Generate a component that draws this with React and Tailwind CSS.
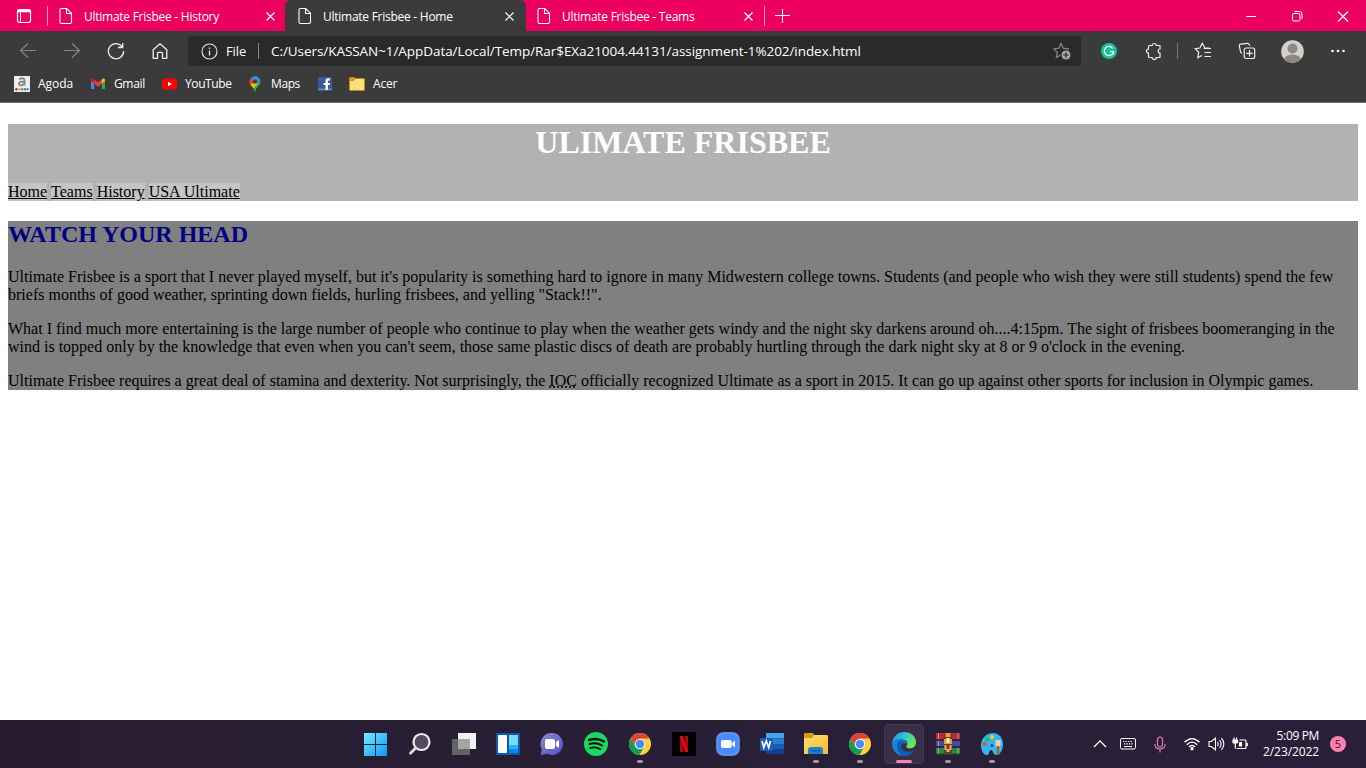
import React from "react";

const ui = "font-['Open_Sans','Noto_Sans',sans-serif]";

function Doc() {
  return (
    <svg width="14" height="18" viewBox="0 0 14 18" fill="none" stroke="#fff" strokeWidth="1.1">
      <path d="M2.500 1.500h5.200l4.800 4.800v8.700q0 1.500-1.500 1.500H2.500q-1.500 0-1.500-1.500V3q0-1.500 1.500-1.500z M7.500 1.500v5h5" />
    </svg>
  );
}

function Tab({ title, active }) {
  return (
    <div className={`relative flex h-8 w-[239px] shrink-0 items-center pl-[11px] ${active ? "-ml-[2px] w-[241px] rounded-t-[6px] bg-[#3b3b3b] pl-[13px]" : ""}`}>
      <Doc />
      <span className="mt-px ml-[11px] w-[174px] text-[12px] leading-4 tracking-[-0.26px] whitespace-nowrap text-white">{title}</span>
      <svg width="24" height="24" viewBox="0 0 24 24" stroke="#fff" strokeWidth="1.2">
        <path d="M8.500 8.500l8 8M16.500 8.500l-8 8" />
      </svg>
    </div>
  );
}

function Slot({ w = "w-11", children }) {
  return <div className={`flex h-full shrink-0 items-center justify-center ${w}`}>{children}</div>;
}

function TabStrip() {
  return (
    <div className="flex h-[31px] shrink-0 overflow-hidden bg-[#eb005f]">
      <div className="flex w-[48px] items-center justify-between">
        <svg className="ml-[16px]" width="16" height="16" viewBox="0 0 16 16" fill="none" stroke="#fff">
          <rect x="1.500" y="1.500" width="13" height="13" rx="2" strokeWidth="1.200" />
          <path d="M1.500 3h13" strokeWidth="2.600" />
          <path d="M4.500 4v10.500" strokeWidth="1" />
        </svg>
        <div className="h-5 w-px bg-[#f896bf]" />
      </div>
      <Tab title="Ultimate Frisbee - History" />
      <Tab title="Ultimate Frisbee - Home" active />
      <Tab title="Ultimate Frisbee - Teams" />
      <div className="my-auto -ml-px h-5 w-px bg-[#f896bf]" />
      <svg className="mt-[8px] ml-[9px]" width="16" height="16" viewBox="0 0 16 16" stroke="#fff" strokeWidth="1.100">
        <path d="M8.500 1v14M1 7.500h15" />
      </svg>
      <div className="ml-auto flex">
        <Slot w="w-[46px]">
          <svg width="12" height="12" viewBox="0 0 12 12" stroke="#fff"><path d="M1 6.500h10" /></svg>
        </Slot>
        <Slot w="w-[46px]">
          <svg width="12" height="12" viewBox="0 0 12 12" fill="none" stroke="#fff">
            <rect x="1.500" y="3.500" width="7.500" height="7.500" rx="1.500" />
            <path d="M3.500 1.500h5q2.500 0 2.500 2.500v5" />
          </svg>
        </Slot>
        <Slot w="w-[46px]">
          <svg width="12" height="12" viewBox="0 0 12 12" stroke="#fff" strokeWidth="1.200"><path d="M1 1.500l10 10M11 1.500l-10 10" /></svg>
        </Slot>
      </div>
    </div>
  );
}

function Toolbar() {
  return (
    <div className="flex h-10 shrink-0 items-center pl-[6px]">
      <Slot>
        <svg width="18" height="18" viewBox="0 0 18 18" fill="none" stroke="#858585" strokeWidth="1.200"><path d="M17 8.500H1.500M9 1.500l-7.500 7 7.500 7" /></svg>
      </Slot>
      <Slot>
        <svg width="18" height="18" viewBox="0 0 18 18" fill="none" stroke="#858585" strokeWidth="1.200"><path d="M1 8.500h15.500M9 1.500l7.500 7-7.500 7" /></svg>
      </Slot>
      <Slot>
        <svg width="18" height="18" viewBox="0 0 18 18" fill="none" stroke="#eee" strokeWidth="1.300"><path d="M15.200 4.800A7.600 7.600 0 1 0 16.600 9M15.700 1v4.500h-4.700" /></svg>
      </Slot>
      <Slot>
        <svg width="18" height="18" viewBox="0 0 18 18" fill="none" stroke="#eee" strokeWidth="1.300"><path d="M2.200 7.800L9 1.700l6.800 6.100v8.500h-4.300v-5q0-1-1-1h-3q-1 0-1 1v5H2.200z" strokeLinejoin="round" /></svg>
      </Slot>
      <div className="ml-[6px] flex h-[30px] w-[893px] items-center rounded-[3px] bg-[#2a2a2a] pl-[13px] text-white">
        <svg width="17" height="17" viewBox="0 0 17 17" fill="none" stroke="#e6e6e6" strokeWidth="1.100">
          <circle cx="8.500" cy="8.500" r="7.500" /><path d="M8.500 7.500v5M8.500 4.500v1.500" strokeWidth="1.300" />
        </svg>
        <span className="mt-px ml-2 w-8 text-[13px] tracking-[-0.1px]">File</span>
        <div className="h-4 w-px bg-[#8a8a8a]" />
        <span className="mt-px ml-3 text-[13.5px] tracking-[-0.06px] whitespace-nowrap">
          C:/Users/KASSAN~1/AppData/Local/Temp/Rar$EXa21004.44131/assignment-1%202/index.html
        </span>
        <svg className="mr-[10px] ml-auto" width="18" height="18" viewBox="0 0 18 18" fill="none">
          <path d="M8 1.500l2.200 4.700 5.200.7-3.900 3.500 1 5.100L8 13l-4.600 2.500.9-5.100L.8 6.900l5.100-.7z" stroke="#8a8a8a" strokeWidth="1.200" />
          <circle cx="13" cy="13" r="5" fill="#a8a8a8" stroke="#2a2a2a" />
          <path d="M13 10.200v5.600M10.200 13h5.600" stroke="#2a2a2a" strokeWidth="1.200" />
        </svg>
      </div>
      <div className="flex h-full items-center pl-[6px]">
        <Slot>
          <svg width="16" height="16" viewBox="0 0 16 16" fill="none">
            <circle cx="8" cy="8" r="8" fill="#15c39a" />
            <path d="M11.700 5.300A4.600 4.600 0 1 0 12.500 8.700H8.900M12.500 8.700v2.800" stroke="#fff" strokeWidth="1.300" />
          </svg>
        </Slot>
        <Slot w="w-[45px]">
          <svg width="18" height="18" viewBox="0 0 18 18" fill="none" stroke="#eee" strokeWidth="1.200" strokeLinejoin="round">
            <path d="M5 3.500H7.200a2 2 0 0 1 4 0H15V7a1.900 1.900 0 0 0 0 3.800V15.500h-3.800a2 2 0 0 1-4 0H4.500q-1 0-1-1V11.200a2 2 0 0 1 0-4V4.500q0-1 1-1z" />
          </svg>
        </Slot>
        <div className="mr-[3px] ml-px h-4 w-px bg-[#777]" />
        <Slot>
          <svg width="18" height="18" viewBox="0 0 18 18" fill="none" stroke="#eee" strokeWidth="1.200">
            <path d="M15.500 6.200l-4.800-.4L8.200 1.300 5.900 6 1.200 6.600l3.500 3.700-.9 5.400 4.100-2.200M9.700 6.500H17M10.500 10.500H17M10.500 14.500H17" />
          </svg>
        </Slot>
        <Slot>
          <svg width="18" height="18" viewBox="0 0 18 18" fill="none" stroke="#eee" strokeWidth="1.200">
            <path d="M4 11.500C2.500 11 2.600 10 2.300 8.500L1.300 4Q1 2.500 2.500 2.200L9.500 1.300Q11.200 1.200 11.700 3.800" />
            <rect x="6.200" y="6" width="10.500" height="10.500" rx="2" /><path d="M11.500 8v6.500M8.200 11.300h6.500" />
          </svg>
        </Slot>
        <Slot w="w-[46px]">
          <svg width="23" height="23" viewBox="0 0 23 23">
            <clipPath id="avatar"><circle cx="11.500" cy="11.500" r="11.300" /></clipPath>
            <g clipPath="url(#avatar)"><path d="M0 0h23v23H0z" fill="#d4d1cd" /><circle cx="11.500" cy="8.500" r="5" fill="#8c8885" /><ellipse cx="11.500" cy="20" rx="8.500" ry="5.500" fill="#8c8885" /></g>
          </svg>
        </Slot>
        <Slot w="w-[45px]">
          <svg width="16" height="4" viewBox="0 0 16 4" fill="#fff"><circle cx="2.500" cy="2" r="1.300" /><circle cx="8" cy="2" r="1.300" /><circle cx="13.500" cy="2" r="1.300" /></svg>
        </Slot>
      </div>
    </div>
  );
}

function Bookmark({ w, label, tracking = "tracking-[-0.2px]", children }) {
  return (
    <div className={`flex shrink-0 items-center gap-2 ${w}`}>
      <div className="flex w-4 shrink-0 justify-center">{children}</div>
      {label && <span className={`text-[12px] leading-4 text-white ${tracking}`}>{label}</span>}
    </div>
  );
}

function Bookmarks() {
  return (
    <div className="flex h-8 shrink-0 items-center border-b border-[#6b6b6b] pb-[6px] pl-[14px]">
      <Bookmark w="w-[76px]" label="Agoda" tracking="tracking-[-0.05px]">
        <svg width="16" height="16" viewBox="0 0 16 16">
          <path d="M0 0h16v16H0z" fill="#eee" />
          <path d="M5 3.200Q10.500.8 10.500 4.500V9.500M10.300 5.400Q5 5.300 5 7.600 5 9.700 7.500 9.300 10 9 10.300 6.500" fill="none" stroke="#858585" strokeWidth="1.900" />
          <circle cx="2.400" cy="13.300" r="1.200" fill="#e12" /><circle cx="5.200" cy="13.300" r="1.200" fill="#fa3" /><circle cx="8" cy="13.300" r="1.200" fill="#3b4" /><circle cx="10.800" cy="13.300" r="1.200" fill="#a4c" /><circle cx="13.600" cy="13.300" r="1.200" fill="#39e" />
        </svg>
      </Bookmark>
      <Bookmark w="w-[71px]" label="Gmail" tracking="tracking-[-0.35px]">
        <svg width="14" height="12" viewBox="0 0 14 12">
          <path d="M0 2v8.500Q0 11 1 11h2.200V5z" fill="#4285f4" /><path d="M14 2v8.500q0 .5-1 .5h-2.200V5z" fill="#34a853" />
          <path d="M2.500 1L7 4.500 11.500 1v4L7 8.700 2.500 5z" fill="#ea4335" /><path d="M0 2Q.6-.7 3.200 1.500v4L0 3z" fill="#c5221f" /><path d="M14 2q-.6-2.700-3.200-.5v4L14 3z" fill="#fbbc04" />
        </svg>
      </Bookmark>
      <Bookmark w="w-[86px]" label="YouTube" tracking="tracking-[-0.4px]">
        <svg width="15" height="12" viewBox="0 0 15 12"><rect y=".5" width="15" height="11" rx="2.500" fill="#f00" /><path d="M6 3.700v4.600L10 6z" fill="#fff" /></svg>
      </Bookmark>
      <Bookmark w="w-[70px]" label="Maps" tracking="tracking-[-0.4px]">
        <svg width="12" height="16" viewBox="0 0 12 16">
          <clipPath id="pin"><path d="M6 .3a5.500 5.500 0 0 0-5.500 5.500C.5 10 5 10.500 5.300 15q.1.800.7.800t.7-.8C7 10.500 11.500 10 11.500 5.800A5.500 5.500 0 0 0 6 .3z" /></clipPath>
          <g clipPath="url(#pin)"><path d="M0 0h12v16H0z" fill="#34a853" /><path d="M0 9l4-5 4.500 4-5.500 6z" fill="#fbbc04" /><path d="M0 0l6 5-6 6z" fill="#ea4335" /><path d="M2 0h10v3.500L8.500 7 2 2z" fill="#4285f4" /></g>
          <circle cx="6" cy="5.700" r="2.100" fill="#3d3d3d" />
        </svg>
      </Bookmark>
      <Bookmark w="w-8">
        <svg width="14" height="14" viewBox="0 0 14 14"><path d="M0 0h14v14H0z" fill="#3b5998" /><path d="M0 11.500h14v1.500H0z" fill="#7186b8" /><path d="M7.500 13V8H5.500V5.900h2V4Q7.500 1.200 10 1.200h2v2.200h-1.200Q9.900 3.400 9.900 4.200v1.700H12L11.700 8H9.900v5z" fill="#fff" /></svg>
      </Bookmark>
      <Bookmark w="w-auto" label="Acer">
        <svg width="16" height="14" viewBox="0 0 16 14" stroke="#bf8a16"><path d="M.5 1.500Q.5.500 1.500.500h4l1 1h8q1 0 1 1v10q0 1-1 1h-13q-1 0-1-1z" fill="#ffdd7c" /><path d="M.5 1.500Q.5.500 1.500.500h4l1 1-2 2H.5z" fill="#d9a122" /></svg>
      </Bookmark>
    </div>
  );
}

function Page() {
  return (
    <main className="flex-1 px-2 pt-[21px] font-['Liberation_Serif',serif] text-[16px] leading-[18px] text-black">
      <header className="h-[77px] bg-[#b2b2b2]">
        <h1 className="text-center text-[32px] leading-[37px] font-bold text-white">ULIMATE FRISBEE</h1>
        <nav className="mt-[22px] flex gap-1">
          {["Home", "Teams", "History", "USA Ultimate"].map((t) => (
            <a key={t} className="h-[18px] bg-[#c5c5c5] underline">{t}</a>
          ))}
        </nav>
      </header>
      <section className="mt-5 h-[169px] bg-[#808080]">
        <h2 className="text-[24px] leading-[27px] font-bold text-[#000080]">WATCH YOUR HEAD</h2>
        <p className="mt-5 whitespace-nowrap">
          Ultimate Frisbee is a sport that I never played myself, but it's popularity is something hard to ignore in many Midwestern college towns. Students (and people who wish they were still students) spend the few<br />
          briefs months of good weather, sprinting down fields, hurling frisbees, and yelling "Stack!!".
        </p>
        <p className="mt-4 whitespace-nowrap">
          What I find much more entertaining is the large number of people who continue to play when the weather gets windy and the night sky darkens around oh....4:15pm. The sight of frisbees boomeranging in the<br />
          wind is topped only by the knowledge that even when you can't seem, those same plastic discs of death are probably hurtling through the dark night sky at 8 or 9 o'clock in the evening.
        </p>
        <p className="mt-4 whitespace-nowrap">
          Ultimate Frisbee requires a great deal of stamina and dexterity. Not surprisingly, the <abbr className="underline decoration-dotted">IOC</abbr> officially recognized Ultimate as a sport in 2015. It can go up against other sports for inclusion in Olympic games.
        </p>
      </section>
    </main>
  );
}

function Chrome() {
  return (
    <svg width="24" height="24" viewBox="0 0 24 24">
      <circle cx="12" cy="12" r="11" fill="#ffcd40" />
      <path d="M2.500 6.500A11 11 0 0 1 21.500 6.500H12L7.500 14.500z" fill="#dc4437" />
      <path d="M2.500 6.500A11 11 0 0 0 11.500 23l4.700-8.500L12 17l-4.700-2.300z" fill="#0f9d58" />
      <circle cx="12" cy="12" r="5.200" fill="#f5f5f5" /><circle cx="12" cy="12" r="4.200" fill="#4c8bf5" />
    </svg>
  );
}

function TaskItem({ mark, active, children }) {
  return (
    <div className="flex h-12 w-11 items-center justify-center">
      <div className={`relative flex h-10 w-10 items-center justify-center ${active ? "rounded-[4px] border border-[#443a50] bg-[#3a3046]" : ""}`}>
        {children}
        {mark && <div className={`absolute h-[3px] rounded-full ${active ? "bottom-0 w-4 bg-[#ff80b0]" : "bottom-px w-[6px] bg-[#a09aa6]"}`} />}
      </div>
    </div>
  );
}

function Taskbar() {
  return (
    <footer className="flex h-12 shrink-0 items-center bg-linear-to-r from-[#281d30] via-[#281f36] to-[#2a1f38] pl-[354px]">
      <TaskItem>
        <svg width="24" height="24" viewBox="0 0 24 24">
          <defs><linearGradient id="win" gradientUnits="userSpaceOnUse" x1="0" y1="0" x2="24" y2="24"><stop stopColor="#73efff" /><stop offset="1" stopColor="#0c93fb" /></linearGradient></defs>
          <path d="M0 1h11v11H0zM12 1h11v11H12zM0 13h11v11H0zM12 13h11v11H12z" fill="url(#win)" />
        </svg>
      </TaskItem>
      <TaskItem>
        <svg width="24" height="24" viewBox="0 0 24 24"><circle cx="13.500" cy="10" r="8" fill="#544a60" stroke="#ececec" strokeWidth="2.200" /><path d="M7.700 16L2.500 21.300" stroke="#ddd" strokeWidth="2.800" strokeLinecap="round" /></svg>
      </TaskItem>
      <TaskItem>
        <svg width="24" height="24" viewBox="0 0 24 24"><path d="M6 1h18v16H6z" fill="#f2f2f2" /><path d="M0 7h18v16H0z" fill="#636363" /><path d="M6 7h12v10H6z" fill="#a5a5a5" /></svg>
      </TaskItem>
      <TaskItem>
        <svg width="24" height="24" viewBox="0 0 24 24"><path d="M0 1h24v22H0z" fill="#0c5bab" /><rect x="2" y="3" width="9" height="18" rx="1" fill="#fafafa" /><path d="M13 3h9v10h-9z" fill="#76dbff" /><path d="M13 13h9v4h-9z" fill="#2cb1f8" /><path d="M13 17h9v4h-9z" fill="#0788ec" /></svg>
      </TaskItem>
      <TaskItem>
        <svg width="24" height="24" viewBox="0 0 24 24">
          <defs><linearGradient id="chat" x1="0" y1="0" x2="1" y2="1"><stop stopColor="#8d88cf" /><stop offset="1" stopColor="#5050c8" /></linearGradient></defs>
          <path d="M12 1a11 11 0 1 1-5 20.800L.8 23l1-5.800A11 11 0 0 1 12 1z" fill="url(#chat)" /><rect x="5" y="7" width="10" height="10" rx="2" fill="#fff" /><path d="M16 10l3-2v8l-3-2z" fill="#fff" />
        </svg>
      </TaskItem>
      <TaskItem>
        <svg width="24" height="24" viewBox="0 0 24 24" fill="none" stroke="#111" strokeLinecap="round"><circle cx="12" cy="12" r="12" fill="#1ed760" stroke="none" /><path d="M5 8q8-2.500 15 1.500" strokeWidth="2.400" /><path d="M5.500 12q7-2 12.500 1.500" strokeWidth="2" /><path d="M6 16q6-1.500 10.500 1.200" strokeWidth="1.700" /></svg>
      </TaskItem>
      <TaskItem mark><Chrome /></TaskItem>
      <TaskItem>
        <svg width="24" height="24" viewBox="0 0 24 24"><path d="M0 0h24v24H0z" fill="#000" /><path d="M8 4h3v16H8z" fill="#b20710" /><path d="M13 4h3v16h-3z" fill="#b20710" /><path d="M8 4h3l5 16h-3z" fill="#e50914" /></svg>
      </TaskItem>
      <TaskItem>
        <svg width="24" height="24" viewBox="0 0 24 24"><rect x=".8" y=".8" width="22.400" height="22.400" rx="6" fill="#4a8cff" stroke="#76a8ff" /><rect x="5" y="8" width="10.500" height="8" rx="2" fill="#fff" /><path d="M16 11l3-2.500v7L16 13z" fill="#fff" /></svg>
      </TaskItem>
      <TaskItem>
        <svg width="24" height="24" viewBox="0 0 24 24"><path d="M6 1h18v5.500H6z" fill="#41a5ee" /><path d="M6 6.500h18V12H6z" fill="#2b7cd3" /><path d="M6 12h18v5.500H6z" fill="#185abd" /><path d="M6 17.500h18V22H6z" fill="#103f91" /><rect y="6" width="13" height="13" rx="1" fill="#1d5bbd" /><path d="M2 9l1.800 6.500L6.300 9l2.400 6.500L10.500 9" fill="none" stroke="#fff" strokeWidth="1.700" /></svg>
      </TaskItem>
      <TaskItem mark>
        <svg width="24" height="24" viewBox="0 0 24 24">
          <defs><linearGradient id="folder" x1="0" y1="0" x2="1" y2="1"><stop stopColor="#ffdf72" /><stop offset="1" stopColor="#f6b82d" /></linearGradient></defs>
          <path d="M0 2q0-1 1-1h8l2 3-2 3H0z" fill="#dd9908" /><path d="M0 6h8l2-3h13q1 0 1 1v18H0z" fill="url(#folder)" /><path d="M4 22v-4q0-3 3-3h9q3 0 3 3v4z" fill="#1583d8" /><path d="M7 18h9v1.500H7z" fill="#0a5ca5" />
        </svg>
      </TaskItem>
      <TaskItem mark><Chrome /></TaskItem>
      <TaskItem mark active>
        <svg className="shrink-0" width="24" height="24" viewBox="0 0 24 24">
          <defs>
            <linearGradient id="edgeTop" x1="0" y1="0" x2="1" y2=".5"><stop stopColor="#1b8fdc" /><stop offset=".5" stopColor="#32c2dc" /><stop offset="1" stopColor="#69eb50" /></linearGradient>
            <linearGradient id="edgeLow" x1="0" y1="0" x2="1" y2="1"><stop stopColor="#178be0" /><stop offset="1" stopColor="#1673cc" /></linearGradient>
          </defs>
          <path d="M.2 11C.8 4.500 6 0 12.200 0 19 0 24 4.800 24 10.200c0 4-3 6-6.200 6-2.300 0-4-.8-3.500-1.800 2.500-3 .3-6.500-3.500-7.200C6 6.500 1.500 8 .2 11z" fill="url(#edgeTop)" />
          <path d="M.1 11C1.500 7.500 5.500 6 9.500 7c3.500 1 5.300 3.300 5 5.500-.5-1.500-3-2-4.500-.5-2.500 2.800 0 8.300 6 8.300 2.500 0 4.500-1 5.800-2C19.800 22 16 24 12 24 5 24-.3 18.500.1 11z" fill="url(#edgeLow)" />
          <path d="M7.500 8.500C3.500 11.500 4 19.500 11 24c4.500.3 8.500-2 10.800-5.700-1.300 1-3.300 2-5.800 2-6 0-8.500-5.500-6-8.300.7-.7 1.600-1 2.500-.9C11.500 9 9.500 8 7.500 8.500z" fill="#0b5db5" />
        </svg>
      </TaskItem>
      <TaskItem mark>
        <svg width="24" height="24" viewBox="0 0 24 24"><path d="M0 1h24v7H0z" fill="#b3294a" /><path d="M0 9h24v6H0z" fill="#4648a8" /><path d="M0 16h24v7H0z" fill="#1f8a43" /><path d="M0 7h24v1.500H0z" fill="#5d1736" /><path d="M0 14h24v1.500H0z" fill="#272760" /><path d="M0 21.500h24V23H0z" fill="#0c4b28" /><path d="M2.500 1v6M2.500 9v5M2.500 16v5.500M22 1v6M22 16v5.500" stroke="#dea53a" /><path d="M8 2h8v20H8z" fill="#6e3a1c" /><path d="M9.500 1h5v4h-5zM8 7h8v5H8z" fill="#f09a32" /><path d="M10.500 6h3v5h-3z" fill="#fff0c0" /><path d="M8.500 13h2v5h-2zM13.500 13h2v5h-2zM10.500 17h3v3h-3z" fill="#e8b070" /></svg>
      </TaskItem>
      <TaskItem mark>
        <svg width="24" height="24" viewBox="0 0 24 24"><path d="M13 1C6 1 1 7 1 13c0 5 2 9 5 10 4 1 2-4 5-5 2-.5 2 5 5 5 4 0 7-5 7-11S19 1 13 1z" fill="#35b6ee" /><circle cx="12" cy="13.500" r="1.300" fill="#20334a" /><circle cx="12" cy="5" r="2" fill="#ffc928" /><circle cx="7" cy="7.500" r="2" fill="#36b54a" /><circle cx="4.500" cy="12" r="2" fill="#e74c3c" /><path d="M15.500 8h5v5l-1 2h-3l-1-2z" fill="#eed2ae" /><path d="M18 14v9" stroke="#a65f24" strokeWidth="2.500" /></svg>
      </TaskItem>

      <div className="ml-auto flex items-center">
        <Slot w="w-[28px]"><svg width="14" height="8" viewBox="0 0 14 8" fill="none" stroke="#fff" strokeWidth="1.300"><path d="M1 7l6-6 6 6" /></svg></Slot>
        <Slot w="w-[28px]">
          <svg width="16" height="12" viewBox="0 0 16 12" fill="none" stroke="#fff"><rect x=".5" y=".5" width="15" height="10.500" rx="1.500" /><path d="M3 3.500h10M4 5.800h9" strokeDasharray="1.300 1.200" strokeWidth="1.200" /><path d="M4 8.500h8" /></svg>
        </Slot>
        <Slot w="w-[36px]">
          <svg width="12" height="17" viewBox="0 0 12 17" fill="none" stroke="#dc7eac" strokeWidth="1.200"><rect x="3.500" y="1" width="5" height="10" rx="2.500" /><path d="M.8 8Q.8 13 6 13t5.200-5M6 13v3.500" /></svg>
        </Slot>
        <Slot w="w-[28px]">
          <svg width="16" height="14" viewBox="0 0 16 14" fill="none" stroke="#fff" strokeWidth="1.300"><path d="M.6 5.300q7.400-7.500 14.800 0M2.800 7.700q5.200-5.200 10.400 0M5 10q3-3 6 0" /><circle cx="8" cy="11.700" r="1.100" fill="#fff" /></svg>
        </Slot>
        <Slot w="w-[21px]">
          <svg width="17" height="14" viewBox="0 0 17 14" fill="none" stroke="#fff" strokeWidth="1.100"><path d="M1 4.500h2.500L7.500 1v12L3.500 9.500H1zM9.500 5q1.500 2 0 4M11.500 3q3.300 4 0 8M13.500 1.200q4.700 5.800 0 11.600" /></svg>
        </Slot>
        <Slot w="w-[25px]">
          <svg width="16" height="14" viewBox="0 0 16 14" fill="none" stroke="#fff" strokeWidth="1.200"><path d="M7.500 3H13q1 0 1 1v6.500q0 1-1 1H4.500M15.300 6v3" /><path d="M7.500 5.500h2v3.500h-2z" fill="#fff" /><path d="M1 3h4.500v2Q5.500 6 4.500 6H2Q1 6 1 5zM2 .5V3M4.500 .5V3" /><path d="M1.500 3.500h3.500v2H1.500z" fill="#fff" /><path d="M3.300 6v5.500" /></svg>
        </Slot>
        <div className="w-[67px] text-right text-[12px] leading-4 tracking-[-0.1px] whitespace-nowrap text-white">
          <div className="tracking-[-0.35px]">5:09 PM</div><div>2/23/2022</div>
        </div>
        <div className="mr-5 ml-[11px] flex h-4 w-4 items-center justify-center rounded-full bg-[#ff80b0] text-[11px] text-[#301525]">5</div>
      </div>
    </footer>
  );
}

export default function App() {
  return (
    <div className={`flex h-[768px] w-[1366px] flex-col overflow-hidden bg-white ${ui}`}>
      <TabStrip />
      <div className="shrink-0 bg-[#3b3b3b]">
        <Toolbar />
        <Bookmarks />
      </div>
      <Page />
      <Taskbar />
    </div>
  );
}
